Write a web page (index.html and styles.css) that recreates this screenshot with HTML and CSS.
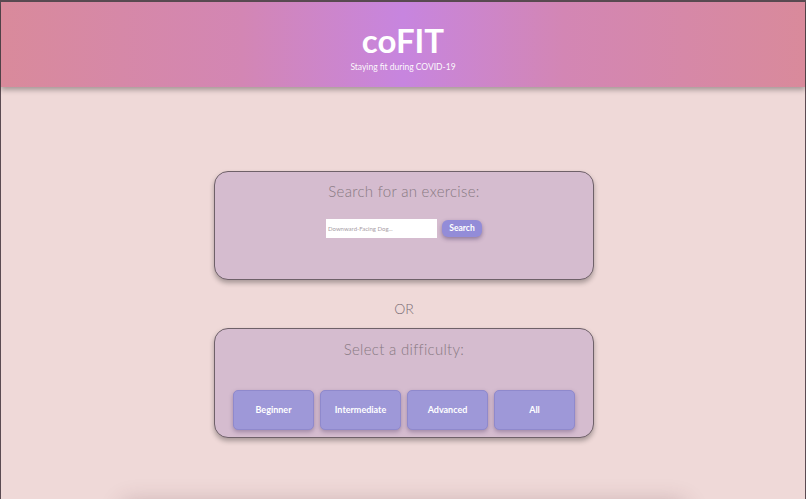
FILE: index.html
```html
<!doctype html>
<html>
<head>
<meta charset="utf-8">
<title>coFIT</title>
<link rel="stylesheet" href="styles.css">
</head>

<body>
<div class="page">
	<div class="header">
		<h1 class="logo">coFIT</h1>
		<p class="slogan">Staying fit during COVID-19</p>
	</div>
	<div class="main">
		<div class="card search">
			<h2 class="title">Search for an exercise:</h2>
			<div class="form">
				<input type="text" class="txt" placeholder="Downward-Facing Dog...">
				<a href="javascript:;" class="btn">Search</a>
			</div>
		</div>
		<p class="or">OR</p>
		<div class="card level">
			<h2 class="title">Select a difficulty:</h2>
			<div class="list">
				<a href="javascript:;">Beginner</a>
				<a href="javascript:;">Intermediate</a>
				<a href="javascript:;">Advanced</a>
				<a href="javascript:;">All</a>
			</div>
		</div>
		<div class="results"></div>
	</div>
</div>
</body>
</html>
```

FILE: styles.css
```css
*{margin:0;padding:0;box-sizing:border-box;}
html,body{height:100%;}
body{background:#efd9d8;font-family:'Lato','Open Sans',sans-serif;overflow:hidden;}
a{text-decoration:none;}
.page{min-height:100%;border:1px solid #5b4b52;border-top-width:2px;border-bottom:none;}
.header{height:85px;background:linear-gradient(to right,#d98a9b 0%,#d386b4 30%,#c785df 50%,#d386b4 70%,#d98a9b 100%);box-shadow:0 3px 5px rgba(0,0,0,.3);text-align:center;color:#fff;padding-top:18px;position:relative;}
.logo{font-size:33px;font-weight:700;line-height:40px;}
.slogan{font-size:8.5px;line-height:12px;margin-top:1px;opacity:.95;}
.main{display:flex;flex-direction:column;align-items:center;padding:84px 0 0 2px;}
.card{width:380px;background:#d5bccf;border:1.5px solid #6f6169;border-radius:14px;box-shadow:0 3px 5px rgba(0,0,0,.3);text-align:center;}
.title{font-size:15px;font-weight:300;color:#887982;line-height:20px;letter-spacing:.3px;}
.search{height:109px;padding-top:9px;}
.form{display:flex;justify-content:center;align-items:center;gap:5px;margin-top:18px;}
.txt{width:111px;height:19px;border:none;outline:none;background:#fff;font:6px 'Lato',sans-serif;padding-left:2px;}
.txt::placeholder{color:#a9a0a6;}
.btn{width:40px;height:17px;line-height:17px;border-radius:6px;background:#938cd8;color:#fff;font-size:8.5px;font-weight:700;box-shadow:0 2px 4px rgba(60,40,90,.45);}
.or{font-size:14px;line-height:18px;color:#7b6d76;font-weight:300;margin:20px 0 10px;}
.level{height:110px;padding-top:10px;}
.list{display:flex;justify-content:center;gap:6px;margin-top:31px;}
.list a{width:81px;height:40px;line-height:38px;border-radius:5px;background:#9e98d8;color:#fff;font-size:9px;font-weight:700;box-shadow:0 2px 4px rgba(60,40,90,.35);border:1px solid #8f89cc;}
.results{width:560px;height:100px;margin-top:66px;background:#efd9d8;box-shadow:0 0 22px rgba(90,50,60,.3);}
```
